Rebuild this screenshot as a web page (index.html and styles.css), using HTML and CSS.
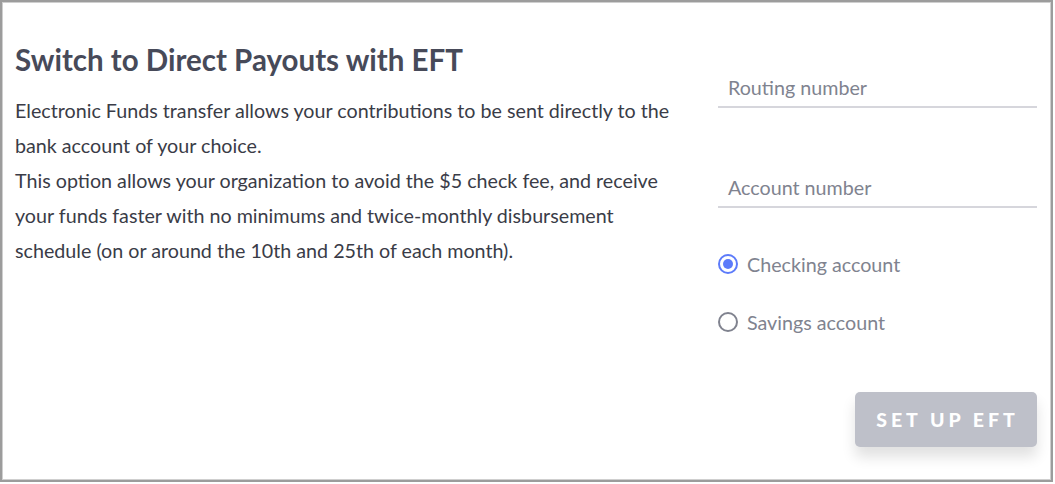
FILE: index.html
```html
<!DOCTYPE html>
<html>
<head>
<meta charset="utf-8">
<link rel="stylesheet" href="styles.css">
</head>
<body>
<div class="card">
  <div class="info">
    <h1 class="title">Switch to Direct Payouts with EFT</h1>
    <p class="desc">Electronic Funds transfer allows your contributions to be sent directly to the bank account of your choice.<br>This option allows your organization to avoid the $5 check fee, and receive your funds faster with no minimums and twice-monthly disbursement schedule (on or around the 10th and 25th of each month).</p>
  </div>
  <div class="form">
    <div class="field"><span class="placeholder">Routing number</span></div>
    <div class="field"><span class="placeholder">Account number</span></div>
    <div class="radios">
      <label class="radio"><span class="dot checked"></span>Checking account</label>
      <label class="radio"><span class="dot"></span>Savings account</label>
    </div>
    <div class="actions"><button class="btn">SET UP EFT</button></div>
  </div>
</div>
</body>
</html>
```
FILE: styles.css
```css
html, body { margin: 0; padding: 0; background: #fff; }
body { font-family: Lato, "Noto Sans", sans-serif; }
.card {
  box-sizing: border-box;
  width: 1053px;
  height: 482px;
  border: 2px solid #9c9c9c;
  box-shadow: 0 0 0 1px #cfcfcf inset;
  display: flex;
  justify-content: space-between;
  padding: 0 14px 0 13px;
}
.info { width: 672px; padding-top: 38px; }
.title {
  margin: 0;
  font-size: 29.5px;
  font-weight: 700;
  color: #474a59;
  line-height: 40px;
}
.desc {
  margin: 13px 0 0;
  font-size: 19.7px;
  line-height: 35px;
  color: #3a3c47;
}
.form { width: 319px; padding-top: 67px; display: flex; flex-direction: column; }
.field {
  height: 39px;
  border-bottom: 2px solid #d6d6dc;
  padding-left: 10px;
  box-sizing: border-box;
  display: flex;
  align-items: center;
  margin-bottom: 61px;
}
.field:nth-child(2) { margin-bottom: 44px; }
.placeholder { font-size: 19.7px; color: #80838f; }
.radios { display: flex; flex-direction: column; gap: 34px; }
.radio { display: flex; align-items: center; font-size: 19.7px; color: #80838f; height: 24px; }
.dot {
  width: 20px; height: 20px; box-sizing: border-box;
  border: 2px solid #80838f; border-radius: 50%;
  margin-right: 9px; display: inline-flex; align-items: center; justify-content: center;
}
.dot.checked { border-color: #5d7bfa; }
.dot.checked::after { content: ""; width: 10px; height: 10px; border-radius: 50%; background: #5d7bfa; }
.actions { display: flex; justify-content: flex-end; margin-top: 58px; }
.btn {
  width: 182px; height: 55px;
  border: none; border-radius: 5px;
  background: #bec0c9;
  color: #fff;
  font-family: Lato, sans-serif;
  font-weight: 900;
  font-size: 19.5px;
  letter-spacing: 4px;
  padding: 0 0 0 3px;
  box-shadow: 0 10px 14px rgba(0,0,0,0.12);
}
```
